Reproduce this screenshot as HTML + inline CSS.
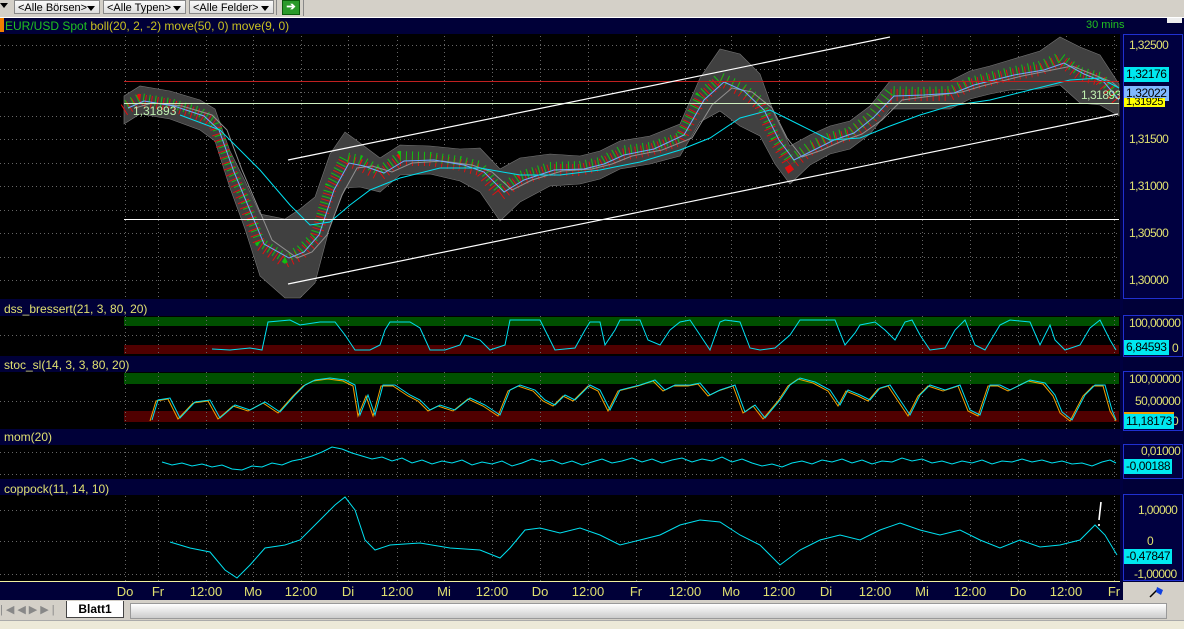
<!DOCTYPE html><html><head><meta charset="utf-8"><style>
body{margin:0;width:1184px;height:628px;overflow:hidden;background:#000038;font-family:"Liberation Sans",sans-serif;position:relative}
.a{position:absolute}
.dd{top:0;height:14px;border:1px solid #888;background:linear-gradient(#fafafa,#ddd);font-size:11px;line-height:14px;padding-left:3px;box-sizing:border-box}
.dd:after{content:"";position:absolute;right:4px;top:5px;border:4px solid transparent;border-top:5px solid #000}
.lab{font-size:11px;color:#e0e070;white-space:nowrap}
.ax{font-size:12px;letter-spacing:-0.6px}
.rp{background:#000040;border:1px solid #2030d0;box-sizing:border-box}
.box{background:#00e8f0;color:#000;font-size:12px;letter-spacing:-0.4px;padding:0 2px;height:15px;line-height:15px}
.t{top:584px;width:40px;text-align:center;font-size:13px}
</style></head><body>
<div class="a" style="left:0;top:0;width:1184px;height:17px;background:#d4d0c8"></div>
<div class="a" style="left:0;top:3px;width:0;height:0;border:4px solid transparent;border-top:5px solid #000"></div>
<div class="a dd" style="left:14px;width:86px">&lt;Alle Börsen&gt;</div>
<div class="a dd" style="left:103px;width:83px">&lt;Alle Typen&gt;</div>
<div class="a dd" style="left:189px;width:85px">&lt;Alle Felder&gt;</div>
<div class="a" style="left:276px;top:0;width:1px;height:15px;background:#888"></div>
<div class="a" style="left:282px;top:0;width:16px;height:13px;background:#2a9a2a;border:1px solid #0a5a0a;color:#fff;font-size:11px;line-height:13px;text-align:center;font-weight:bold">➔</div>
<div class="a" style="left:303px;top:0;width:1px;height:16px;background:#888"></div>
<div class="a" style="left:0;top:17px;width:1184px;height:1px;background:#fff"></div>

<svg class="a" style="left:0;top:0" width="1184" height="628">
<rect x="0" y="34" width="1121" height="265" fill="#000"/>
<rect x="0" y="316" width="1121" height="40" fill="#000"/>
<rect x="0" y="372" width="1121" height="57" fill="#000"/>
<rect x="0" y="445" width="1121" height="34" fill="#000"/>
<rect x="0" y="495" width="1121" height="86" fill="#000"/>
<rect x="124" y="317" width="995" height="9" fill="#005000"/>
<rect x="124" y="345" width="995" height="9" fill="#500000"/>
<rect x="124" y="373" width="995" height="11" fill="#005000"/>
<rect x="124" y="411" width="995" height="11" fill="#500000"/>
<g stroke="#666" stroke-dasharray="1,3" fill="none">
<path d="M125.5 36V581M158.5 36V581M206.5 36V581M253.5 36V581M301.5 36V581M348.5 36V581M397.5 36V581M444.5 36V581M492.5 36V581M540.5 36V581M588.5 36V581M636.5 36V581M685.5 36V581M731.5 36V581M779.5 36V581M826.5 36V581M875.5 36V581M922.5 36V581M970.5 36V581M1018.5 36V581M1066.5 36V581M1114.5 36V581"/>
<path d="M0 45.5H1120M0 69.5H1120M0 92.5H1120M0 116.5H1120M0 139.5H1120M0 163.5H1120M0 186.5H1120M0 210.5H1120M0 233.5H1120M0 257.5H1120M0 280.5H1120M0 335.5H1120M0 401.5H1120M0 452.5H1120M0 474.5H1120M0 510.5H1120M0 541.5H1120M0 574.5H1120"/>
</g>
<rect x="0" y="299" width="1121" height="17" fill="#000038"/>
<rect x="0" y="356" width="1121" height="16" fill="#000038"/>
<rect x="0" y="429" width="1121" height="16" fill="#000038"/>
<rect x="0" y="479" width="1121" height="16" fill="#000038"/>
<polygon fill="#404040" stroke="#777" stroke-width=".6" points="124,96 140,86 170,91 200,100 215,109 230,151 245,181 260,214 285,219 300,209 315,197 330,154 345,132 360,143 380,158 400,145 430,146 460,149 480,148 500,169 520,158 550,154 580,156 600,151 620,141 650,136 680,124 700,78 720,49 740,54 760,74 775,116 790,146 810,135 830,126 850,121 870,106 890,81 920,81 950,81 970,71 990,66 1010,60 1040,51 1060,37 1080,47 1100,55 1119,84 1119,116 1100,105 1080,103 1060,85 1040,89 1010,90 990,94 970,99 950,109 920,109 890,109 870,134 850,149 830,154 810,165 790,184 775,164 760,136 740,126 720,111 700,122 680,156 650,164 620,169 600,179 580,184 550,186 520,202 500,221 480,192 460,181 430,174 400,175 380,192 360,187 345,188 330,226 315,283 300,298 285,298 260,276 245,229 230,188 215,141 200,130 170,119 140,114 124,124"/>
<polyline fill="none" stroke="#e01010" stroke-width="12" stroke-dasharray="1,5" points="124,110 140,100 170,105 200,115 215,125 230,170 245,205 260,245 285,262 300,255 315,240 330,190 345,160 360,165 380,175 400,160 430,160 460,165 480,170 500,195 520,180 550,170 580,170 600,165 620,155 650,150 680,140 700,100 720,80 740,90 760,105 775,140 790,165 810,150 830,140 850,135 870,120 890,95 920,95 950,95 970,85 990,80 1010,75 1040,70 1060,60 1080,75 1100,80 1117,100"/>
<polyline fill="none" stroke="#10c010" stroke-width="10" stroke-dasharray="1,5" stroke-dashoffset="3" points="124,106 140,98 170,103 200,112 215,122 230,166 245,200 260,242 285,258 300,250 315,236 330,186 345,157 360,160 380,171 400,156 430,157 460,161 480,166 500,190 520,176 550,167 580,166 600,162 620,151 650,147 680,137 700,96 720,77 740,86 760,101 775,137 790,160 810,146 830,137 850,132 870,117 890,91 920,92 950,91 970,82 990,77 1010,72 1040,66 1060,57 1080,72 1100,77 1117,96"/>
<polyline fill="none" stroke="#909090" points="135,108 152,103 182,106 212,115 227,130 242,170 257,205 272,240 297,258 312,252 327,235 342,195 357,168 372,166 392,172 412,163 442,161 472,165 492,172 512,190 532,180 562,171 592,169 612,164 632,156 662,150 692,138 712,105 732,88 752,92 772,108 787,138 802,157 822,150 842,141 862,134 882,120 902,100 932,96 962,92 982,86 1002,81 1022,76 1052,70 1072,66 1092,74 1112,82 1119,88"/>
<polyline fill="none" stroke="#70a8ff" points="128,108 144,101 174,106 204,116 219,130 234,172 249,208 264,244 289,258 304,252 319,235 334,190 349,163 364,166 384,173 404,161 434,160 464,165 484,172 504,192 524,180 554,170 584,169 604,164 624,155 654,149 684,135 704,100 724,82 744,91 764,110 779,140 794,160 814,150 834,140 854,133 874,117 894,96 924,95 954,93 974,85 994,80 1014,75 1044,70 1064,63 1084,74 1104,82 1119,100"/>
<polyline fill="none" stroke="#00e0f0" points="180,115 220,130 260,170 290,205 310,225 330,222 350,205 370,190 400,178 440,168 480,168 520,175 560,175 600,170 640,162 680,150 710,138 740,118 770,110 800,125 830,140 860,138 890,126 920,115 950,106 990,100 1030,90 1070,80 1100,78 1119,88"/>
<line x1="124" y1="81.5" x2="1119" y2="81.5" stroke="#c02020"/>
<line x1="124" y1="103.5" x2="1119" y2="103.5" stroke="#d0f0c0"/>
<line x1="124" y1="219.5" x2="1119" y2="219.5" stroke="#fff"/>
<line x1="288" y1="160" x2="890" y2="37" stroke="#fff" stroke-width="1.2"/>
<line x1="288" y1="284" x2="1118" y2="114" stroke="#fff" stroke-width="1.2"/>
<text x="133" y="115" fill="#c0f0b0" font-size="12" font-family="Liberation Sans">1,31893</text>
<text x="1081" y="99" fill="#c0f0b0" font-size="12" font-family="Liberation Sans" letter-spacing="-0.5">1,31893</text>
<polyline fill="none" stroke="#00e0f0" points="212,349 230,350 250,348 262,350 268,322 290,320 300,325 320,322 335,322 345,335 355,350 370,350 380,345 385,330 390,322 410,322 420,328 430,350 445,350 460,345 465,335 480,340 490,350 505,345 510,320 540,320 545,330 555,350 575,348 585,330 590,322 600,322 605,345 615,330 620,320 640,320 648,340 660,345 670,330 680,322 690,320 700,335 710,350 720,322 725,320 740,322 750,348 760,350 775,348 790,335 800,320 835,320 845,345 855,333 860,325 875,322 885,330 895,340 905,322 912,320 920,335 930,350 945,348 955,330 965,320 975,345 985,350 1000,325 1010,320 1030,322 1040,345 1050,325 1055,340 1065,350 1080,345 1090,328 1100,320 1110,340 1116,350"/>
<polyline fill="none" stroke="#f0a000" points="150,421 156,401 168,399 178,419 193,403 208,401 218,419 233,406 248,411 263,403 278,413 293,396 303,386 313,381 328,379 343,381 353,386 358,416 366,396 373,416 381,386 393,386 408,396 418,401 428,411 438,406 453,411 468,399 483,406 498,416 508,391 518,386 533,391 543,401 553,406 563,396 573,401 588,386 598,391 608,411 618,391 638,386 653,381 663,391 673,386 688,386 698,384 708,396 718,391 733,386 743,413 753,406 763,419 778,401 788,386 798,379 813,383 828,391 838,406 846,391 858,396 868,401 878,389 888,386 898,401 908,416 918,396 928,386 943,391 958,386 968,411 978,416 988,386 998,386 1008,391 1018,386 1028,381 1043,384 1053,396 1060,413 1070,421 1083,396 1093,386 1103,386 1110,411 1116,421"/>
<polyline fill="none" stroke="#00e0f0" points="152,420 158,400 170,398 180,418 195,402 210,400 220,418 235,405 250,410 265,402 280,412 295,395 305,385 315,380 330,378 345,380 355,385 360,415 368,395 375,415 383,385 395,385 410,395 420,400 430,410 440,405 455,410 470,398 485,405 500,415 510,390 520,385 535,390 545,400 555,405 565,395 575,400 590,385 600,390 610,410 620,390 640,385 655,380 665,390 675,385 690,385 700,383 710,395 720,390 735,385 745,412 755,405 765,418 780,400 790,385 800,378 815,382 830,390 840,405 848,390 860,395 870,400 880,388 890,385 900,400 910,415 920,395 930,385 945,390 960,385 970,410 980,415 990,385 1000,385 1010,390 1020,385 1030,380 1045,383 1055,395 1062,412 1072,420 1085,395 1095,385 1105,385 1112,410 1116,420"/>
<polyline fill="none" stroke="#00e0f0" points="162,462 172,465 182,463 192,466 202,464 212,467 222,465 232,469 242,470 252,466 262,467 272,463 282,465 292,461 302,459 312,456 322,452 332,447 342,449 352,453 362,456 372,459 382,457 392,461 402,458 412,463 422,460 432,464 442,461 452,463 462,460 472,465 482,462 492,464 502,461 512,466 522,463 532,459 542,462 552,460 562,464 572,461 582,465 592,462 602,459 612,463 622,461 632,458 642,462 652,459 662,463 672,460 682,458 692,462 702,459 712,461 722,457 732,462 742,459 752,463 762,466 772,464 782,467 792,463 802,461 812,464 822,460 832,462 842,459 852,463 862,460 872,464 882,461 892,462 902,458 912,461 922,459 932,463 942,461 952,464 962,461 972,463 982,460 992,464 1002,461 1012,462 1022,459 1032,462 1042,460 1052,463 1062,461 1072,464 1082,463 1092,466 1102,462 1110,460 1116,463"/>
<polyline fill="none" stroke="#00e0f0" points="170,542 190,548 210,552 225,570 237,578 250,565 265,548 285,545 300,540 320,520 335,505 345,497 355,510 365,540 375,550 390,545 420,543 450,548 480,550 500,558 510,548 525,530 540,528 560,533 580,528 600,535 620,545 640,540 660,535 680,525 700,520 720,522 740,535 760,545 780,565 800,550 820,540 840,535 860,540 880,530 900,523 920,530 940,535 960,530 980,540 1000,548 1020,540 1040,547 1060,545 1080,540 1095,525 1105,535 1117,555"/>
<path d="M1101 502 L1099 520 M1099 524 L1099 526" stroke="#fff" stroke-width="1.6"/>
<line x1="0" y1="581.5" x2="1121" y2="581.5" stroke="#f0f0a0"/>
<rect x="1120" y="34" width="3" height="548" fill="#000040"/>
</svg>

<div class="a" style="left:0;top:18px;width:4px;height:14px;background:#f08000"></div>
<div class="a lab" style="left:5px;top:19px;font-size:12px"><span style="color:#20c020">EUR/USD Spot</span> <span style="color:#c8c020">boll(20, 2, -2) move(50, 0) move(9, 0)</span></div>
<div class="a lab" style="left:1086px;top:19px;color:#20c020">30 mins</div>
<div class="a" style="left:1167px;top:18px;width:15px;height:5px;background:#eee"></div>

<div class="a rp" style="left:1123px;top:34px;width:60px;height:265px"></div>
<div class="a rp" style="left:1123px;top:315px;width:60px;height:42px"></div>
<div class="a rp" style="left:1123px;top:371px;width:60px;height:60px"></div>
<div class="a rp" style="left:1123px;top:444px;width:60px;height:35px"></div>
<div class="a rp" style="left:1123px;top:494px;width:60px;height:87px"></div>

<div class="a lab ax" style="left:1129px;top:38px">1,32500</div>
<div class="a lab ax" style="left:1129px;top:85px">1,32000</div>
<div class="a lab ax" style="left:1129px;top:132px">1,31500</div>
<div class="a lab ax" style="left:1129px;top:179px">1,31000</div>
<div class="a lab ax" style="left:1129px;top:226px">1,30500</div>
<div class="a lab ax" style="left:1129px;top:273px">1,30000</div>
<div class="a box" style="left:1124px;top:67px">1,32176</div>
<div class="a box" style="left:1124px;top:86px;background:#80b8ff">1,32022</div>
<div class="a box" style="left:1124px;top:98px;height:9px;line-height:9px;background:#ffff00;font-size:11px;overflow:hidden">1,31925</div>

<div class="a lab ax" style="left:1129px;top:316px">100,00000</div>
<div class="a lab ax" style="left:1172px;top:341px">0</div>
<div class="a box" style="left:1124px;top:340px">6,84593</div>
<div class="a lab ax" style="left:1129px;top:372px">100,00000</div>
<div class="a lab ax" style="left:1135px;top:394px">50,00000</div>
<div class="a lab ax" style="left:1172px;top:414px">0</div>
<div class="a box" style="left:1124px;top:412px;border-top:2px solid #f0a000">11,18173</div>
<div class="a lab ax" style="left:1141px;top:444px">0,01000</div>
<div class="a box" style="left:1124px;top:459px">-0,00188</div>
<div class="a lab ax" style="left:1138px;top:503px">1,00000</div>
<div class="a lab ax" style="left:1147px;top:534px">0</div>
<div class="a box" style="left:1124px;top:549px">-0,47847</div>
<div class="a lab ax" style="left:1134px;top:567px">-1,00000</div>

<div class="a lab" style="left:4px;top:302px;font-size:12px">dss_bressert(21, 3, 80, 20)</div>
<div class="a lab" style="left:4px;top:358px;font-size:12px">stoc_sl(14, 3, 3, 80, 20)</div>
<div class="a lab" style="left:4px;top:430px;font-size:12px">mom(20)</div>
<div class="a lab" style="left:4px;top:482px;font-size:12px">coppock(11, 14, 10)</div>

<div class="a lab t" style="left:105px">Do</div><div class="a lab t" style="left:138px">Fr</div><div class="a lab t" style="left:186px">12:00</div><div class="a lab t" style="left:233px">Mo</div><div class="a lab t" style="left:281px">12:00</div><div class="a lab t" style="left:328px">Di</div><div class="a lab t" style="left:377px">12:00</div><div class="a lab t" style="left:424px">Mi</div><div class="a lab t" style="left:472px">12:00</div><div class="a lab t" style="left:520px">Do</div><div class="a lab t" style="left:568px">12:00</div><div class="a lab t" style="left:616px">Fr</div><div class="a lab t" style="left:665px">12:00</div><div class="a lab t" style="left:711px">Mo</div><div class="a lab t" style="left:759px">12:00</div><div class="a lab t" style="left:806px">Di</div><div class="a lab t" style="left:855px">12:00</div><div class="a lab t" style="left:902px">Mi</div><div class="a lab t" style="left:950px">12:00</div><div class="a lab t" style="left:998px">Do</div><div class="a lab t" style="left:1046px">12:00</div><div class="a lab t" style="left:1094px">Fr</div>

<div class="a" style="left:1123px;top:582px;width:61px;height:18px;background:#d4d0c8"></div>
<svg class="a" style="left:1148px;top:584px" width="20" height="14"><path d="M2 13 L10 5" stroke="#000" stroke-width="1.5"/><path d="M9 3 L15 6 L13 11 L8 8Z" fill="#1040e0"/></svg>
<div class="a" style="left:0;top:600px;width:1184px;height:20px;background:#d4d0c8"></div>
<div class="a" style="left:0;top:620px;width:1184px;height:8px;background:#ece9d8;border-top:1px solid #aaa"></div>
<div class="a" style="left:0;top:603px;width:60px;height:16px;color:#888;font-size:11px;letter-spacing:3px">|◀◀▶▶|</div>
<div class="a" style="left:66px;top:601px;width:56px;height:16px;background:#fff;border:1px solid #444;border-top:none;font-size:12px;font-weight:bold;text-align:center;line-height:16px">Blatt1</div>
<div class="a" style="left:130px;top:603px;width:1035px;height:14px;background:linear-gradient(#fff,#ccc);border:1px solid #999"></div>
</body></html>
